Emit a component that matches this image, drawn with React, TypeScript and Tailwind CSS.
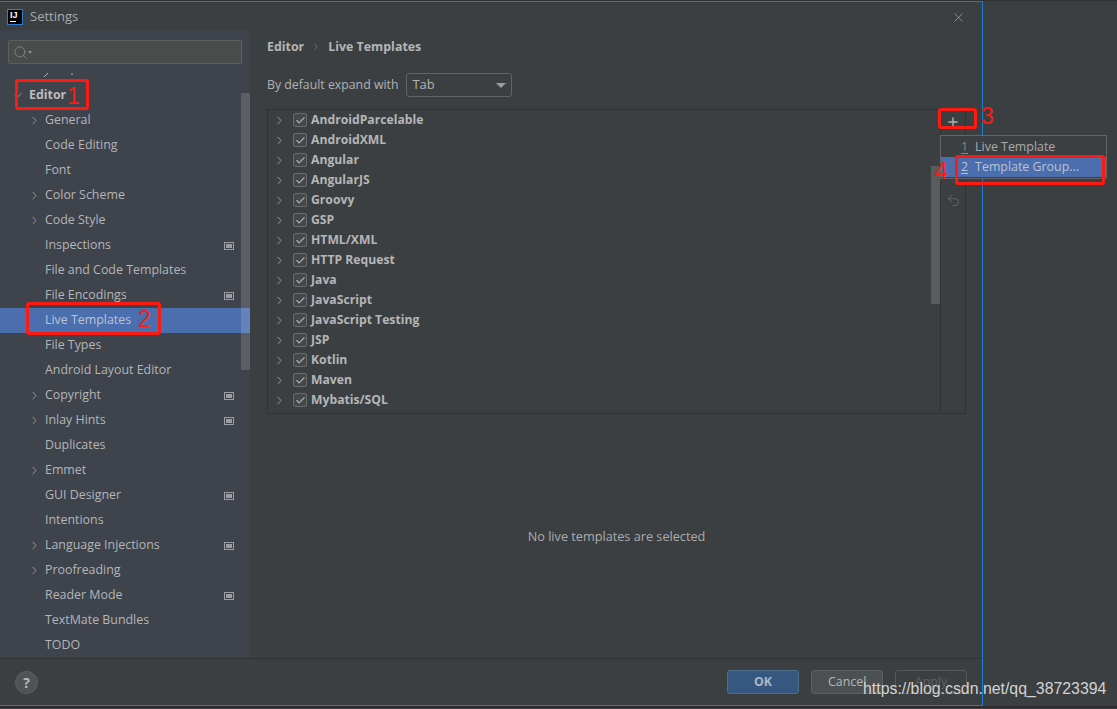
import { ChevronRight, Check, Plus, Undo2, X, Search } from "lucide-react";

const font = { fontFamily: '"Open Sans", "Noto Sans", sans-serif' };

const navItems = [
  { label: "General", arrow: true },
  { label: "Code Editing" },
  { label: "Font" },
  { label: "Color Scheme", arrow: true },
  { label: "Code Style", arrow: true },
  { label: "Inspections", badge: true },
  { label: "File and Code Templates" },
  { label: "File Encodings", badge: true },
  { label: "Live Templates", active: true },
  { label: "File Types" },
  { label: "Android Layout Editor" },
  { label: "Copyright", arrow: true, badge: true },
  { label: "Inlay Hints", arrow: true, badge: true },
  { label: "Duplicates" },
  { label: "Emmet", arrow: true },
  { label: "GUI Designer", badge: true },
  { label: "Intentions" },
  { label: "Language Injections", arrow: true, badge: true },
  { label: "Proofreading", arrow: true },
  { label: "Reader Mode", badge: true },
  { label: "TextMate Bundles" },
  { label: "TODO" },
];

const groups = [
  "AndroidParcelable",
  "AndroidXML",
  "Angular",
  "AngularJS",
  "Groovy",
  "GSP",
  "HTML/XML",
  "HTTP Request",
  "Java",
  "JavaScript",
  "JavaScript Testing",
  "JSP",
  "Kotlin",
  "Maven",
  "Mybatis/SQL",
];

function ProjectBadge() {
  return (
    <svg width="10" height="10" viewBox="0 0 10 10" className="shrink-0">
      <rect x="0.5" y="1.5" width="9" height="7" fill="none" stroke="#9a9da1" />
      <rect x="2" y="3" width="6" height="4" fill="#9a9da1" />
    </svg>
  );
}

function Annotation({ className }: { className: string }) {
  return <div className={`absolute border-[3px] border-[#fb1b12] rounded-[3px] ${className}`} />;
}

function Digit({ className, children }: { className: string; children: string }) {
  return (
    <span
      className={`absolute text-[#fb1b12] text-[23px] leading-none ${className}`}
      style={{ fontFamily: '"Liberation Sans", sans-serif' }}
    >
      {children}
    </span>
  );
}

export default function App() {
  return (
    <div className="relative w-[1117px] h-[709px] overflow-hidden bg-[#3c3f41] text-[12.4px] text-[#bbbbbb]" style={font}>
      <div className="h-px bg-[#2f3133]" />
      <div className="flex flex-col w-[983px] h-[705px] border-t border-r border-b border-[#1a7fd4]">
        {/* Title bar */}
        <div className="h-[28px] flex items-center shrink-0 pt-[2px] pl-[7px] pr-[16px] gap-[7px]">
          <div className="relative w-[16px] h-[16px] bg-black border border-[#2a7fd0] shrink-0">
            <span
              className="absolute left-[2px] top-[0px] text-white text-[9px] font-bold leading-[10px]"
              style={{ fontFamily: '"Liberation Sans", sans-serif' }}
            >
              IJ
            </span>
            <div className="absolute left-[2px] bottom-[2px] w-[6px] h-px bg-white" />
          </div>
          <span className="text-[13px] text-[#a9abad]">Settings</span>
          <X className="ml-auto text-[#a0a2a4]" size={15} strokeWidth={1.2} />
        </div>

        <div className="flex flex-1 min-h-0">
          {/* Sidebar */}
          <div className="relative w-[250px] shrink-0 bg-[#3e434c] overflow-hidden">
            <div className="mx-[8px] mt-[10px] h-[24px] rounded-[2px] border border-[#5e6060] bg-[#4a4c4c] flex items-center pl-[4px]">
              <Search size={15} strokeWidth={1.2} className="text-[#8d8f91]" />
              <div className="w-0 h-0 border-x-[2.5px] border-x-transparent border-t-[3px] border-t-[#8d8f91]" />
            </div>
            <div className="h-[8px]" />
            <svg width="80" height="6" viewBox="0 0 80 6" className="block">
              <path d="M44 5 L48 1" stroke="#b0b2b4" strokeWidth="1" fill="none" />
              <path d="M72 1 L72 3" stroke="#b0b2b4" strokeWidth="1" fill="none" />
            </svg>
            <div className="h-[5px]" />
            <div className="h-[25px] flex items-center pl-[13px]">
              <Check size={10} strokeWidth={1.5} className="text-[#b5b7b9] mr-[6px]" />
              <span className="font-bold text-[#bcbec0]">Editor</span>
            </div>
            {navItems.map((item) => (
              <div
                key={item.label}
                className={`h-[25px] flex items-center pr-[16px] ${item.active ? "bg-[#4b6eaf]" : ""}`}
              >
                <div className="w-[45px] shrink-0 flex justify-end pr-[4px]">
                  {item.arrow && <ChevronRight size={13} strokeWidth={1.5} className="text-[#a9abad]" />}
                </div>
                <span className={item.active ? "text-[#b9c3d3]" : "text-[#b4b6b8]"}>{item.label}</span>
                {item.badge && (
                  <div className="ml-auto">
                    <ProjectBadge />
                  </div>
                )}
              </div>
            ))}
            <div className="absolute right-0 top-[63px] w-[9px] h-[277px] bg-white/15" />
          </div>

          {/* Main panel */}
          <div className="flex-1 min-w-0 flex flex-col pl-[17px] pr-[16px]">
            <div className="h-[34px] flex items-center font-bold text-[12.4px] text-[#b4b6b8]">
              <span>Editor</span>
              <ChevronRight size={10} strokeWidth={1.5} className="mx-[7px] text-[#8f9193]" />
              <span>Live Templates</span>
            </div>
            <div className="flex items-center mt-[8px] h-[26px] text-[12.3px] text-[#b0b2b4]">
              <span>By default expand with</span>
              <div className="ml-[8px] w-[106px] h-[24px] border border-[#646464] rounded-[3px] flex items-center pl-[5px] pr-[5px] justify-between text-[13px]">
                <span>Tab</span>
                <div className="w-0 h-0 border-x-[5px] border-x-transparent border-t-[5px] border-t-[#9a9c9e]" />
              </div>
            </div>
            <div className="mt-[11px] h-[305px] border border-[#323232] flex">
              <div className="relative flex-1 min-w-0">
                {groups.map((name) => (
                  <div key={name} className="h-[20px] flex items-center pl-[5px]">
                    <ChevronRight size={13} strokeWidth={1.5} className="text-[#a9abad]" />
                    <div className="ml-[7px] w-[14px] h-[14px] rounded-[2px] border border-[#6b6b6b] bg-[#43494a] flex items-center justify-center">
                      <Check size={11} strokeWidth={2.4} className="text-[#b0b0b0]" />
                    </div>
                    <span className="ml-[4px] font-bold text-[12.2px] text-[#b4b6b8]">{name}</span>
                  </div>
                ))}
                <div className="absolute right-0 top-[56px] w-[9px] h-[138px] bg-[#595b5d]" />
              </div>
              <div className="w-[25px] shrink-0 border-l border-[#323232] flex flex-col items-center">
                <Plus size={14} strokeWidth={2.4} className="mt-[5px] text-[#b0b2b4]" />
                <Undo2 size={15} strokeWidth={1.6} className="mt-[64px] text-[#636567]" />
              </div>
            </div>
            <div className="flex-1 flex items-center justify-center text-[12.7px] text-[#a9abad] pt-[2px]">
              No live templates are selected
            </div>
          </div>
        </div>

        {/* Footer */}
        <div className="h-[47px] shrink-0 border-t border-[#323232] flex items-center pl-[15px] pr-[15px]">
          <div className="w-[23px] h-[23px] rounded-full bg-[#505355] border border-[#5c5f61] flex items-center justify-center font-bold text-[14px] text-[#b8babc]">
            ?
          </div>
          <button className="ml-auto w-[72px] h-[24px] rounded-[3px] bg-[#365880] border border-[#4c708c] font-bold text-[#a9b7c6]">
            OK
          </button>
          <button className="ml-[12px] w-[72px] h-[24px] rounded-[3px] bg-[#4c5052] border border-[#5e6060] text-[#b4b6b8] text-left pl-[16px]">
            Cancel
          </button>
          <button className="ml-[12px] w-[72px] h-[24px] rounded-[3px] border border-[#565859] text-[#5f6163]">
            Apply
          </button>
        </div>
      </div>
      <div className="h-[2px] bg-[#2b2b2b]" />

      {/* Popup menu */}
      <div className="absolute left-[940px] top-[135px] w-[167px] h-[44px] bg-[#3c3f41] border border-[#646464] pt-[1px]">
        <div className="h-[20px] flex items-center pl-[20px] text-[#a9abad]">
          <span className="underline underline-offset-2 mr-[7px] text-[#85888a]">1</span>
          <span>Live Template</span>
        </div>
        <div className="h-[20px] flex items-center pl-[20px] bg-[#4b6eaf] text-[#b9c3d3]">
          <span className="underline underline-offset-2 mr-[7px]">2</span>
          <span>Template Group...</span>
        </div>
      </div>

      {/* Red annotations */}
      <Annotation className="left-[15px] top-[79px] w-[74px] h-[31px]" />
      <Annotation className="left-[26px] top-[302px] w-[135px] h-[33px]" />
      <Annotation className="left-[938px] top-[108px] w-[39px] h-[21px]" />
      <Annotation className="left-[955px] top-[155px] w-[150px] h-[30px]" />
      <Digit className="left-[67px] top-[85px]">1</Digit>
      <Digit className="left-[138px] top-[308px]">2</Digit>
      <Digit className="left-[981px] top-[105px]">3</Digit>
      <Digit className="left-[935px] top-[160px]">4</Digit>

      {/* Watermark */}
      <span
        className="absolute left-[863px] top-[680px] text-[15.87px] leading-[18px] text-[#d2d2d2] whitespace-nowrap"
        style={{ fontFamily: '"Liberation Sans", sans-serif' }}
      >
        https://blog.csdn.net/qq_38723394
      </span>
    </div>
  );
}
